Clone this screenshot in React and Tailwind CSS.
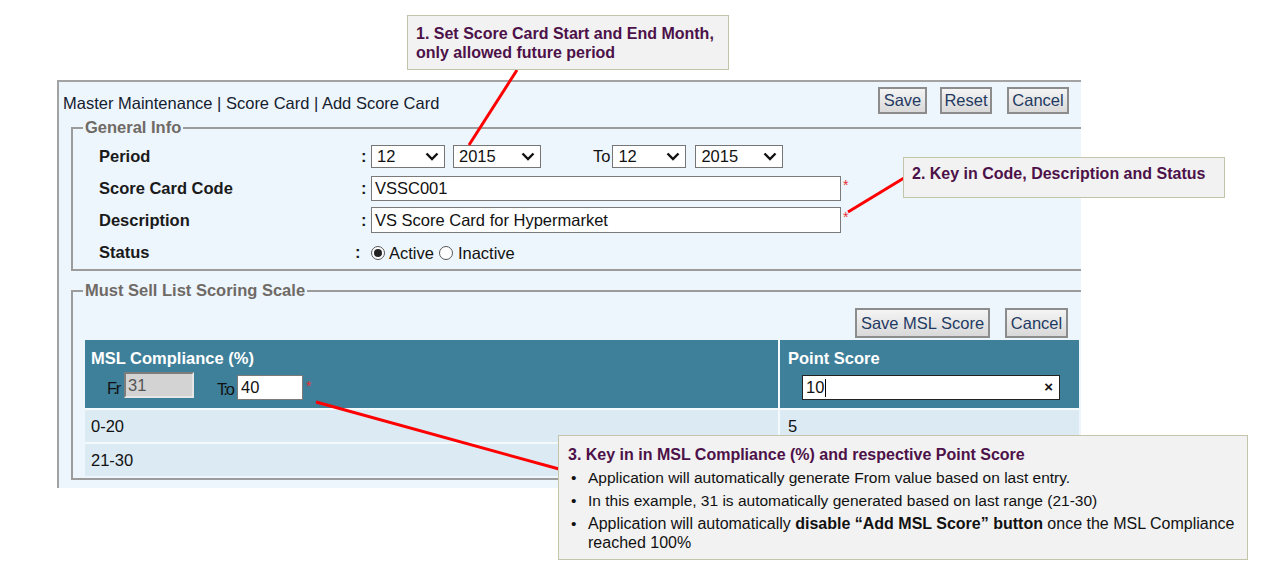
import React from "react";

const font = { fontFamily: '"Liberation Sans", Arial, sans-serif' };

// grey toolbar-style button
const Btn = ({ children, className }) => (
  <button
    className={`h-full border-2 border-[#8c8c8c] bg-gradient-to-b from-[#f4f4f4] to-[#d9d9d9] text-[16.5px] leading-none text-[#1f3a62] ${className}`}
  >
    {children}
  </button>
);

const Chevron = () => (
  <svg width="14" height="9" viewBox="0 0 14 9">
    <polyline points="1.5,1.5 7,7 12.5,1.5" fill="none" stroke="#111" strokeWidth="2.4" />
  </svg>
);

const Select = ({ value, className }) => (
  <div
    className={`flex h-[23px] items-center justify-between border border-[#767676] bg-white pl-[5px] pr-[5px] text-[16.5px] ${className}`}
  >
    <span>{value}</span>
    <Chevron />
  </div>
);

const Radio = ({ checked }) => (
  <span className="flex h-[14px] w-[14px] items-center justify-center rounded-full border border-[#555] bg-white">
    {checked && <span className="h-[8px] w-[8px] rounded-full bg-[#222]" />}
  </span>
);

const Star = () => (
  <span className="self-start pl-[2px] pt-[6px] text-[14px] leading-none text-[#e53030]">*</span>
);

const Row = ({ label, children, colonClass = "w-[10px]", labelClass = "w-[262px]" }) => (
  <div className="flex h-[32px] items-center">
    <div className={`text-[16.5px] font-bold text-[#1a1a1a] ${labelClass}`}>{label}</div>
    <div className={`text-[16.5px] font-bold text-[#1a1a1a] ${colonClass}`}>:</div>
    {children}
  </div>
);

const App = () => {
  return (
    <div className="relative h-[576px] w-[1273px] overflow-hidden bg-white text-[#111]" style={font}>
      {/* main panel */}
      <div className="ml-[57px] mt-[80px] h-[408px] w-[1024px] overflow-hidden border-l-2 border-t-2 border-[#a3a3a3] bg-[#eef6fd]">
        {/* header */}
        <div className="flex h-[36px] pl-[4px] pr-[12px]">
          <div className="flex-1 pt-[12px] text-[16.5px] leading-[19px] text-[#14202e]">
            Master Maintenance | Score Card | Add Score Card
          </div>
          <div className="mt-[5px] flex h-[27px] items-center gap-[13px]">
            <Btn className="w-[49px]">Save</Btn>
            <Btn className="w-[52px]">Reset</Btn>
            <Btn className="ml-[2px] w-[62px]">Cancel</Btn>
          </div>
        </div>

        {/* General Info */}
        <fieldset className="ml-[12px] w-[1040px] border-2 border-[#9c9c9c]">
          <legend className="ml-[10px] px-[2px] text-[16.5px] font-bold leading-[19px] text-[#6f6a66]">
            General Info
          </legend>
          <div className="pb-[1px] pl-[26px] pt-[3px]">
            <Row label="Period">
              <Select value="12" className="w-[74px]" />
              <Select value="2015" className="ml-[8px] w-[88px]" />
              <span className="ml-[52px] self-start pt-[4px] text-[16.5px]">To</span>
              <Select value="12" className="ml-[2px] w-[74px]" />
              <Select value="2015" className="ml-[9px] w-[88px]" />
            </Row>
            <Row label="Score Card Code">
              <div className="flex h-[25px] w-[470px] items-center border border-[#7a7a7a] bg-white pl-[3px] text-[16.5px]">
                VSSC001
              </div>
              <Star />
            </Row>
            <Row label="Description">
              <div className="flex h-[26px] w-[470px] items-center border border-[#7a7a7a] bg-white pl-[3px] text-[16.5px]">
                VS Score Card for Hypermarket
              </div>
              <Star />
            </Row>
            <Row label="Status" labelClass="w-[256px]" colonClass="w-[16px]">
              <div className="flex items-center pt-[2px] text-[16.5px]">
                <Radio checked />
                <span className="ml-[4px]">Active</span>
                <span className="ml-[5px]">
                  <Radio />
                </span>
                <span className="ml-[5px]">Inactive</span>
              </div>
            </Row>
          </div>
        </fieldset>

        {/* Must Sell List Scoring Scale */}
        <fieldset className="ml-[12px] mt-[10px] w-[1040px] border-2 border-[#9c9c9c]">
          <legend className="ml-[10px] px-[2px] text-[16.5px] font-bold leading-[19px] text-[#6f6a66]">
            Must Sell List Scoring Scale
          </legend>
          <div className="pb-[2px] pl-[12px] pt-[8px]">
            <div className="flex h-[30px] w-[994px] justify-end gap-[15px] pr-[11px]">
              <Btn className="w-[135px]">Save MSL Score</Btn>
              <Btn className="w-[63px]">Cancel</Btn>
            </div>

            <div className="mt-[2px] flex w-[994px] flex-col gap-[2px] bg-[#f4f9fc]">
              {/* table header */}
              <div className="flex h-[68px] gap-[2px]">
                <div className="w-[693px] bg-[#3e7f9a] pl-[6px] pt-[9px]">
                  <div className="text-[16.5px] font-bold leading-[19px] text-white">MSL Compliance (%)</div>
                  <div className="mt-[4px] flex items-start pl-[16px]">
                    <span className="mt-[4px] w-[17px] whitespace-nowrap text-[16.5px] tracking-[-2px] text-[#111]">
                      F.r
                    </span>
                    <div className="flex h-[26px] w-[70px] items-center border-2 border-b-[#e6e6e6] border-l-[#7d7d7d] border-r-[#e6e6e6] border-t-[#7d7d7d] bg-[#d3d3d3] pl-[2px] text-[16.5px] text-[#555]">
                      31
                    </div>
                    <span className="ml-[23px] mt-[5px] w-[20px] whitespace-nowrap text-[16.5px] tracking-[-2px] text-[#111]">
                      T:o
                    </span>
                    <div className="mt-[3px] flex h-[25px] w-[66px] items-center border border-[#7a7a7a] bg-white pl-[3px] text-[16.5px]">
                      40
                    </div>
                    <span className="mt-[7px] pl-[3px] text-[14px] leading-none text-[#e53030]">*</span>
                  </div>
                </div>
                <div className="w-[299px] bg-[#3e7f9a] pl-[8px] pt-[9px]">
                  <div className="text-[16.5px] font-bold leading-[19px] text-white">Point Score</div>
                  <div className="ml-[14px] mt-[7px] flex h-[25px] w-[258px] items-center justify-between border border-[#222] bg-white pl-[3px] pr-[6px] text-[16.5px]">
                    <span className="flex items-center">
                      10<span className="ml-[1px] h-[18px] w-px bg-black" />
                    </span>
                    <span className="text-[15px] font-bold">×</span>
                  </div>
                </div>
              </div>

              {[
                ["0-20", "5"],
                ["21-30", ""],
              ].map(([range, score]) => (
                <div key={range} className="flex h-[32px] gap-[2px] text-[16.5px]">
                  <div className="flex w-[693px] items-center bg-[#dbeaf3] pl-[6px]">{range}</div>
                  <div className="flex w-[299px] items-center bg-[#dbeaf3] pl-[8px]">{score}</div>
                </div>
              ))}
            </div>
          </div>
        </fieldset>
      </div>

      {/* red pointer lines */}
      <svg className="pointer-events-none absolute left-0 top-0" width="1273" height="576">
        <line x1="517" y1="70" x2="469" y2="145" stroke="#ff0000" strokeWidth="3" />
        <line x1="904" y1="178" x2="848" y2="212" stroke="#ff0000" strokeWidth="3" />
        <line x1="316" y1="402" x2="559" y2="469" stroke="#ff0000" strokeWidth="3" />
      </svg>

      {/* callout 1 */}
      <div className="absolute left-[407px] top-[15px] h-[55px] w-[322px] border border-[#c4c4aa] bg-[#f2f2f2] pl-[8px] pt-[8px] text-[16px] font-bold leading-[19px] text-[#4d1149]">
        1. Set Score Card Start and End Month,
        <br />
        only allowed future period
      </div>

      {/* callout 2 */}
      <div className="absolute left-[903px] top-[157px] h-[41px] w-[322px] border border-[#c4c4aa] bg-[#f2f2f2] pl-[8px] pt-[6px] text-[16px] font-bold leading-[19px] text-[#4d1149]">
        2. Key in Code, Description and Status
      </div>

      {/* callout 3 */}
      <div className="absolute left-[558px] top-[435px] h-[125px] w-[690px] border border-[#c4c4aa] bg-[#f2f2f2] pl-[9px] pt-[9px]">
        <div className="text-[16px] font-bold leading-[19px] text-[#4d1149]">
          3. Key in in MSL Compliance (%) and respective Point Score
        </div>
        <ul className="mt-[4px] flex flex-col gap-[4px] text-[15.5px] leading-[19px] text-[#111]">
          <li className="flex">
            <span className="w-[20px] pl-[3px]">•</span>
            <span>Application will automatically generate From value based on last entry.</span>
          </li>
          <li className="flex">
            <span className="w-[20px] pl-[3px]">•</span>
            <span>In this example, 31 is automatically generated based on last range (21-30)</span>
          </li>
          <li className="flex">
            <span className="w-[20px] shrink-0 pl-[3px]">•</span>
            <span className="w-[655px] text-[16px]">
              Application will automatically <b>disable “Add MSL Score” button</b> once the MSL Compliance
              reached 100%
            </span>
          </li>
        </ul>
      </div>
    </div>
  );
};

export default App;
